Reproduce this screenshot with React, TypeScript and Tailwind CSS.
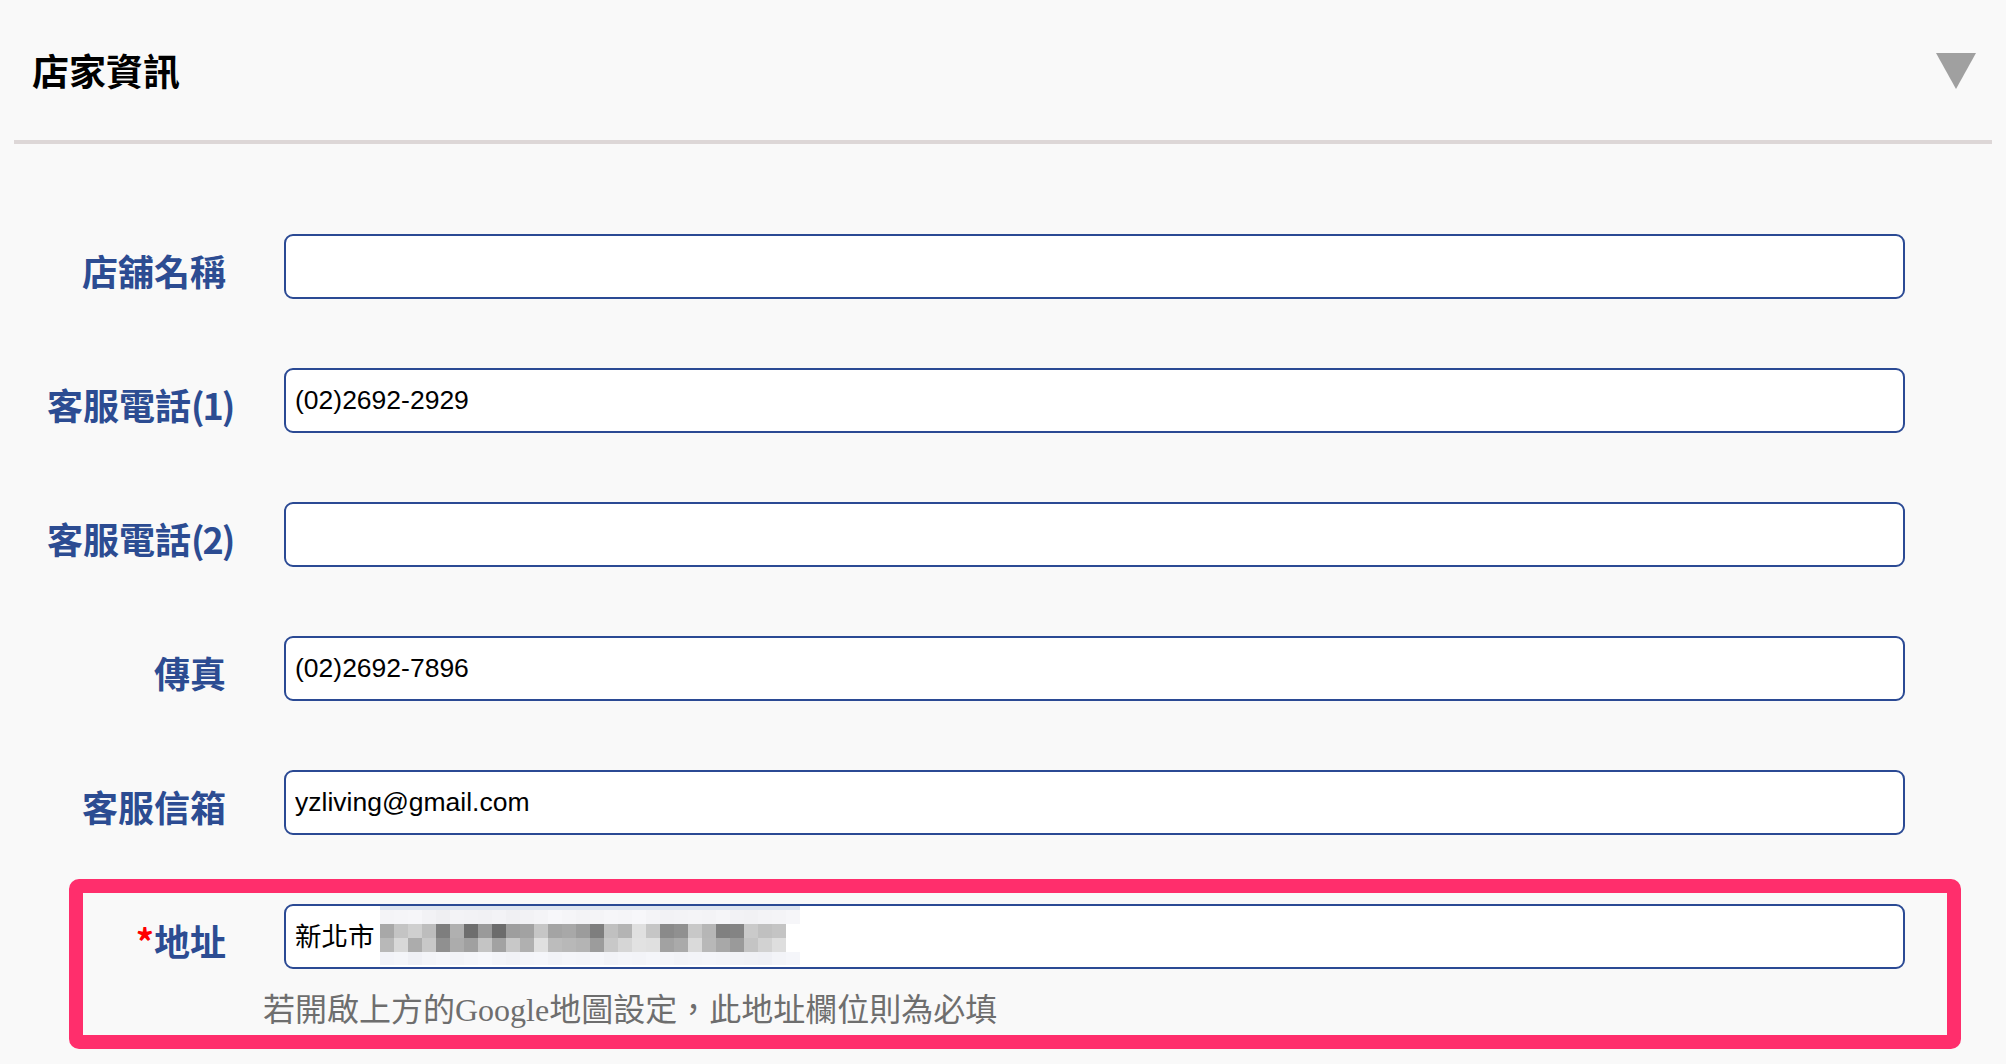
import React from 'react';

const rows = [
  { label: '店舖名稱', value: '' },
  { label: '客服電話(1)', value: '(02)2692-2929' },
  { label: '客服電話(2)', value: '' },
  { label: '傳真', value: '(02)2692-7896' },
  { label: '客服信箱', value: 'yzliving@gmail.com' },
];

const rowA = ['#f4f4f7','#f5f5f8','#f6f6f9','#f2f2f5','#efeff2','#f3f3f6','#f2f2f5','#f1f1f4','#f3f3f6','#f0f0f3','#f2f2f5','#f4f4f7','#f7f7fa','#f5f5f8','#f3f3f6','#f4f4f7','#f6f6f9','#f5f5f8','#f7f7fa','#f4f4f7','#f2f2f5','#f3f3f6','#f4f4f7','#f3f3f6','#f5f5f8','#f2f2f5','#f1f1f4','#f3f3f6','#f4f4f7','#f6f6f9'];
const rowB = ['#a8a8a8','#c4c4c4','#cfcfcf','#bdbdbd','#7e7e7e','#b0b0b0','#6e6e6e','#9a9a9a','#6c6c6c','#9e9e9e','#a2a2a2','#c6c6c6','#a4a4a4','#a8a8a8','#9c9c9c','#7e7e7e','#c0c0c0','#b4b4b4','#e0e0e0','#c6c6c6','#8a8a8a','#909090','#c8c8c8','#b6b6b6','#808080','#848484','#cacaca','#c0c0c0','#c4c4c4','#ffffff'];
const rowC = ['#b8b8b8','#d8d8d8','#acacac','#c8c8c8','#909090','#acacac','#a0a0a0','#c4c4c4','#a2a2a2','#c8c8c8','#b0b0b0','#e0e0e0','#bcbcbc','#b8b8b8','#b4b4b4','#9c9c9c','#c8c8c8','#d6d6d6','#e2e2e2','#e0e0e0','#a2a2a2','#aaaaaa','#dadada','#b8b8b8','#a8a8a8','#9a9a9a','#c4c4c4','#d2d2d2','#dedede','#ffffff'];
const rowD = ['#f2f3f8','#f4f5f9','#eff0f5','#f3f4f8','#f5f6fa','#f2f3f7','#f4f5f9','#f6f7fb','#f3f4f8','#f1f2f6','#f4f5f9','#f5f6fa','#f2f3f7','#f4f5f9','#f3f4f8','#f5f6fa','#f2f3f7','#f4f5f9','#f3f4f8','#f5f6fa','#f4f5f9','#f2f3f7','#f3f4f8','#f4f5f9','#f3f4f8','#f1f2f6','#f0f1f5','#eff0f5','#f3f4f8','#f5f6fa'];

function CellRow({ colors, h }: { colors: string[]; h: string }) {
  return (
    <div className={`flex ${h}`}>
      {colors.map((c, i) => (
        <div key={i} className="w-[14px] h-full" style={{ backgroundColor: c }} />
      ))}
    </div>
  );
}

const labelCls =
  "w-[179px] shrink-0 text-right whitespace-nowrap mt-[6px] text-[36px] leading-[44px] font-bold text-[#2c4c92] font-['Noto_Sans_CJK_TC',sans-serif]";

const fieldCls =
  "ml-[58px] min-w-0 flex-1 h-[65px] rounded-[9px] border-2 border-[#2b4a94] bg-white pl-[9px] text-[26.5px] text-black outline-none font-['Liberation_Sans','Noto_Sans_CJK_TC',sans-serif]";

function Label({ text }: { text: string }) {
  const m = text.match(/^(.*?)(\(\d\))$/);
  if (!m) return <>{text}</>;
  return (
    <>
      {m[1]}
      <span className="tracking-[-2px]">{m[2]}</span>
    </>
  );
}

export default function App() {
  return (
    <div className="min-h-[1064px] bg-[#f9f9f9] font-['Noto_Sans_CJK_TC',sans-serif]">
      <div className="flex h-[140px] items-center justify-between pl-[32px] pr-[30px]">
        <h1 className="text-[37px] leading-[44px] font-bold text-black">店家資訊</h1>
        <svg width="40" height="36" viewBox="0 0 40 36" className="mt-[2px]">
          <polygon points="0,0 40,0 20,36" fill="#a0a0a0" />
        </svg>
      </div>
      <div className="mx-[14px] h-[4px] bg-[#ddd7d7]" />

      <div className="flex flex-col gap-[69px] pt-[90px]">
        {rows.map((r) => (
          <div key={r.label} className="flex h-[65px] items-center pl-[47px] pr-[101px]">
            <div className={labelCls}>
              <Label text={r.label} />
            </div>
            <input className={fieldCls} readOnly defaultValue={r.value} />
          </div>
        ))}

        <div className="relative">
          <div className="pointer-events-none absolute left-[69px] right-[45px] top-[-25px] h-[170px] rounded-[10px] border-[14px] border-[#ff2e6c]" />
          <div className="flex h-[65px] items-center pl-[47px] pr-[101px]">
            <div className={labelCls}>
              <span className="text-[#ff0000]">*</span>地址
            </div>
            <div className={`${fieldCls} flex items-center`}>
              <span className="leading-[30px]">新北市</span>
              <div className="ml-[5px] flex flex-col self-start">
                <CellRow colors={Array(30).fill('#dee5f0')} h="h-[4px]" />
                <CellRow colors={rowA} h="h-[14px]" />
                <CellRow colors={rowB} h="h-[14px]" />
                <CellRow colors={rowC} h="h-[14px]" />
                <CellRow colors={rowD} h="h-[13px]" />
              </div>
            </div>
          </div>
          <p className="mt-[25px] pl-[263px] text-[32px] leading-[32px] text-[#6e6e6e] font-['Liberation_Serif','Noto_Sans_CJK_TC',serif]">
            若開啟上方的Google地圖設定，此地址欄位則為必填
          </p>
        </div>
      </div>
    </div>
  );
}
